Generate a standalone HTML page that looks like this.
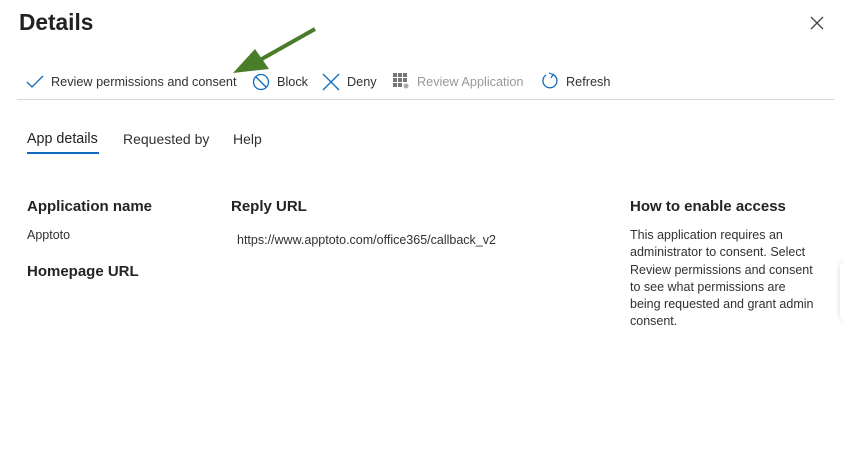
<!DOCTYPE html>
<html><head><style>
body{margin:0;width:844px;height:458px;background:#fff;font-family:"Liberation Sans",sans-serif;color:#222;position:relative;overflow:hidden}
.a{position:absolute;white-space:nowrap}
.tb{font-size:12.7px;top:75px;color:#323130}
.hd{font-size:15px;font-weight:bold;color:#252423}
.tx{font-size:12.5px;color:#323130}
</style></head><body>
<div class="a" style="left:19px;top:9px;font-size:22.7px;font-weight:bold;color:#222">Details</div>
<svg class="a" style="left:809px;top:15px" width="16" height="16"><path d="M2 2L14 14M14 2L2 14" stroke="#444" stroke-width="1.3"/></svg>
<svg class="a" style="left:225px;top:25px" width="100" height="50"><path d="M90 4L35 35" stroke="#4a7d2a" stroke-width="4"/><polygon points="8,48 44,44 30,24" fill="#4a7d2a"/></svg>
<svg class="a" style="left:26px;top:74px" width="18" height="16"><path d="M1 8L6 13L17 2" stroke="#0f6cbd" stroke-width="1.3" fill="none"/></svg>
<div class="a tb" style="left:51px">Review permissions and consent</div>
<svg class="a" style="left:252px;top:73px" width="18" height="18"><circle cx="9" cy="9" r="7.5" stroke="#0f6cbd" stroke-width="1.3" fill="none"/><path d="M4 4L14 14" stroke="#0f6cbd" stroke-width="1.3"/></svg>
<div class="a tb" style="left:277px">Block</div>
<svg class="a" style="left:322px;top:73px" width="18" height="18"><path d="M1 1L17 17M17 1L1 17" stroke="#0f6cbd" stroke-width="1.3"/></svg>
<div class="a tb" style="left:347px">Deny</div>
<svg class="a" style="left:393px;top:73px" width="16" height="16"><g fill="#777"><rect x="0" y="0" width="4" height="4"/><rect x="5" y="0" width="4" height="4"/><rect x="10" y="0" width="4" height="4"/><rect x="0" y="5" width="4" height="4"/><rect x="5" y="5" width="4" height="4"/><rect x="10" y="5" width="4" height="4"/><rect x="0" y="10" width="4" height="4"/><rect x="5" y="10" width="4" height="4"/></g><circle cx="13" cy="13" r="2.5" fill="#aaa"/></svg>
<div class="a tb" style="left:417px;color:#999">Review Application</div>
<svg class="a" style="left:541px;top:72px" width="18" height="18"><path d="M12 2.5A7 7 0 1 1 5 3" stroke="#0f6cbd" stroke-width="1.3" fill="none"/><path d="M8 1L12 2.5L10 6" stroke="#0f6cbd" stroke-width="1.2" fill="none"/></svg>
<div class="a tb" style="left:566px">Refresh</div>
<div class="a" style="left:17px;top:99px;width:817px;height:1px;background:#d6d6d6"></div>
<div class="a" style="left:27px;top:131px;font-size:14.3px;color:#222">App details</div>
<div class="a" style="left:27px;top:152px;width:72px;height:2px;background:#0f6cbd"></div>
<div class="a" style="left:123px;top:131px;font-size:14px;color:#323130">Requested by</div>
<div class="a" style="left:233px;top:131px;font-size:14px;color:#323130">Help</div>
<div class="a hd" style="left:27px;top:198px">Application name</div>
<div class="a tx" style="left:27px;top:228px">Apptoto</div>
<div class="a hd" style="left:27px;top:263px">Homepage URL</div>
<div class="a hd" style="left:231px;top:198px">Reply URL</div>
<div class="a tx" style="left:237px;top:233px">https://www.apptoto.com/office365/callback_v2</div>
<div class="a hd" style="left:630px;top:198px">How to enable access</div>
<div class="a tx" style="left:630px;top:227px;line-height:17.3px">This application requires an<br>administrator to consent. Select<br>Review permissions and consent<br>to see what permissions are<br>being requested and grant admin<br>consent.</div>
<div class="a" style="left:840px;top:262px;width:10px;height:58px;border-radius:5px;box-shadow:0 0 6px rgba(0,0,0,.15)"></div>
</body></html>
